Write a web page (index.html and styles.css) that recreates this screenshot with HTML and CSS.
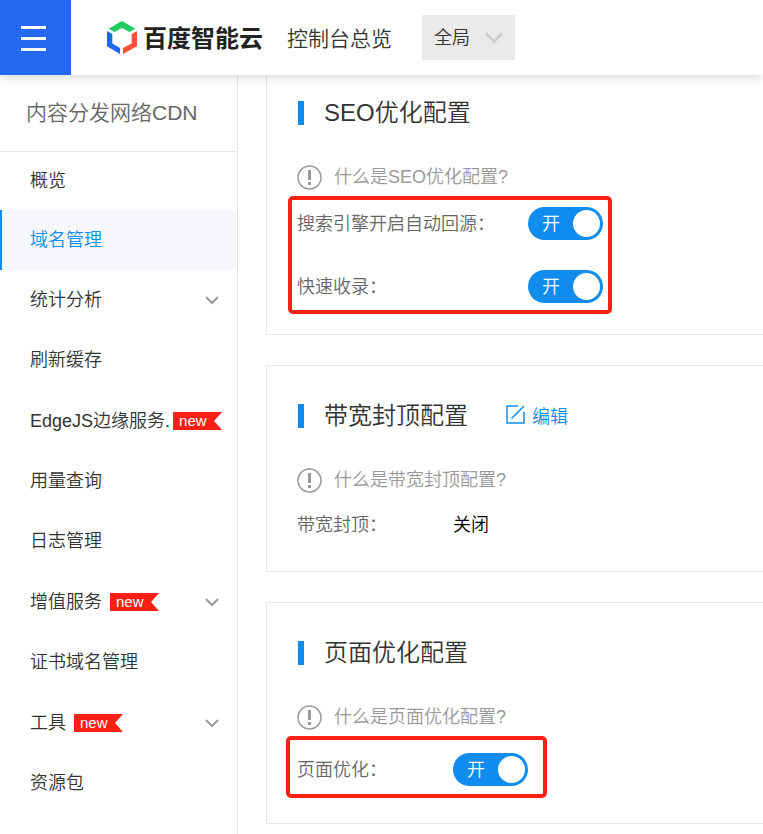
FILE: index.html
```
<!DOCTYPE html>
<html lang="zh-CN">

<head>
  <meta charset="utf-8">
  <title>内容分发网络CDN</title>
  <link rel="stylesheet" href="styles.css">
</head>

<body>
  <header class="header">
    <button type="button" class="menu-toggle" aria-label="菜单">
      <span></span>
      <span></span>
      <span></span>
    </button>
    <a href="#" class="logo">
      <svg width="30" height="34" viewBox="0 0 30 34">
        <path fill="#21cb63" d="M1.500 7.800 15 0l13.500 7.800-6 3.200-7.500-4-7.500 4z" />
        <path fill="#1a66ff" d="M0 10l5.300 3v9.500l7.700 4.500v6L0 25.300z" />
        <path fill="#ff5038" d="M30 10l-5.300 3v9.500L16 27v6l14-7.700z" />
      </svg>
      <span>百度智能云</span>
    </a>
    <a href="#" class="overview">控制台总览</a>
    <div class="region">
      <select aria-label="区域">
        <option>全局</option>
      </select>
      <svg width="18" height="12" viewBox="0 0 18 12">
        <path d="M1 1.500l8 8 8-8" />
      </svg>
    </div>
  </header>

  <div class="layout">
    <nav class="sidebar">
      <h1>内容分发网络CDN</h1>
      <ul class="menu">
        <li><a href="#" class="first">概览</a></li>
        <li><a href="#" class="active">域名管理</a></li>
        <li>
          <a href="#">统计分析
            <svg class="arrow" width="14" height="9" viewBox="0 0 14 9"><path d="M1 1l6 6 6-6" /></svg>
          </a>
        </li>
        <li><a href="#">刷新缓存</a></li>
        <li><a href="#" class="has-badge"><span class="long">EdgeJS边缘服务.</span><span class="badge">new</span></a></li>
        <li><a href="#">用量查询</a></li>
        <li><a href="#">日志管理</a></li>
        <li>
          <a href="#" class="has-badge">增值服务<span class="badge">new</span>
            <svg class="arrow" width="14" height="9" viewBox="0 0 14 9"><path d="M1 1l6 6 6-6" /></svg>
          </a>
        </li>
        <li><a href="#">证书域名管理</a></li>
        <li>
          <a href="#" class="has-badge">工具<span class="badge">new</span>
            <svg class="arrow" width="14" height="9" viewBox="0 0 14 9"><path d="M1 1l6 6 6-6" /></svg>
          </a>
        </li>
        <li><a href="#">资源包</a></li>
      </ul>
    </nav>

    <main class="content">
      <section class="card">
        <div class="card-title">
          <h2>SEO优化配置</h2>
        </div>
        <p class="tip">
          <svg width="25" height="25" viewBox="0 0 25 25"><circle cx="12.500" cy="12.500" r="11.500" /><path d="M12.500 5v10M12.500 17v3" /></svg>
          <span>什么是SEO优化配置?</span>
        </p>
        <div class="rows wide marked">
          <div class="row">
            <label for="autoSource">搜索引擎开启自动回源：</label>
            <span class="switch"><input type="checkbox" id="autoSource" checked><span>开</span></span>
          </div>
          <div class="row">
            <label for="fastIndex">快速收录：</label>
            <span class="switch"><input type="checkbox" id="fastIndex" checked><span>开</span></span>
          </div>
        </div>
      </section>

      <section class="card">
        <div class="card-title">
          <h2>带宽封顶配置</h2>
          <a href="#" class="edit">
            <svg width="19" height="19" viewBox="0 0 19 19"><path d="M12 1H1v17h17V7M5.500 13.500L18 1" /></svg>
            编辑
          </a>
        </div>
        <p class="tip">
          <svg width="25" height="25" viewBox="0 0 25 25"><circle cx="12.500" cy="12.500" r="11.500" /><path d="M12.500 5v10M12.500 17v3" /></svg>
          <span>什么是带宽封顶配置?</span>
        </p>
        <div class="rows">
          <div class="row">
            <span class="name">带宽封顶：</span>
            <span class="value">关闭</span>
          </div>
        </div>
      </section>

      <section class="card">
        <div class="card-title">
          <h2>页面优化配置</h2>
        </div>
        <p class="tip">
          <svg width="25" height="25" viewBox="0 0 25 25"><circle cx="12.500" cy="12.500" r="11.500" /><path d="M12.500 5v10M12.500 17v3" /></svg>
          <span>什么是页面优化配置?</span>
        </p>
        <div class="rows marked single">
          <div class="row">
            <label for="pageOptimize">页面优化：</label>
            <span class="switch"><input type="checkbox" id="pageOptimize" checked><span>开</span></span>
          </div>
        </div>
      </section>
    </main>
  </div>
</body>

</html>
```

FILE: styles.css
```
*,
*::before,
*::after {
  box-sizing: border-box;
}

body {
  margin: 0;
  min-height: 100vh;
  display: flex;
  flex-direction: column;
  font-family: "Liberation Sans", "Noto Sans CJK SC", sans-serif;
  font-size: 18px;
  font-weight: 350;
  color: #333;
  background-color: #fff;
}

a {
  color: inherit;
  text-decoration: none;
}

svg {
  flex: none;
  fill: none;
}

/* Header */
.header {
  position: sticky;
  top: 0;
  z-index: 1;
  display: flex;
  align-items: center;
  height: 75px;
  background-color: #fff;
  box-shadow: 0 2px 10px rgba(0, 0, 0, 0.16);
}

.menu-toggle {
  display: flex;
  flex-direction: column;
  justify-content: center;
  gap: 8px;
  width: 71px;
  height: 75px;
  padding: 1px 25px 0 21px;
  border: none;
  background-color: #2468f2;
  cursor: pointer;
}

.menu-toggle span {
  height: 3px;
  background-color: #fff;
}

.logo {
  display: flex;
  align-items: center;
  gap: 6px;
  margin-left: 36px;
  font-size: 24px;
  font-weight: 700;
  color: #222;
}

.logo span {
  padding-bottom: 2px;
}

.overview {
  margin-left: 24px;
  padding-bottom: 2px;
  font-size: 21px;
}

.region {
  position: relative;
  margin-left: 30px;
}

.region select {
  width: 93px;
  height: 45px;
  padding: 0 12px;
  border: none;
  border-radius: 0;
  background-color: #eaeaea;
  color: #333;
  font: inherit;
  appearance: none;
}

.region svg {
  position: absolute;
  right: 12px;
  top: 17px;
  stroke: #ccc;
  stroke-width: 3;
  pointer-events: none;
}

/* Sidebar */
.layout {
  display: flex;
  flex: 1;
}

.sidebar {
  flex: none;
  width: 238px;
  padding-right: 1px;
  border-right: 1px solid #e6e6e6;
}

.sidebar h1 {
  margin: 0;
  padding-left: 26px;
  border-bottom: 1px solid #e8e8e8;
  font-size: 21px;
  font-weight: inherit;
  line-height: 76px;
  color: #666;
}

.menu {
  margin: 0;
  padding: 0;
  list-style: none;
}

.menu a {
  display: flex;
  align-items: center;
  height: 60px;
  padding: 0 17px 4px 30px;
  white-space: nowrap;
}

.menu a.first {
  height: 58px;
}

.menu a.has-badge {
  height: 61px;
}

.menu a.active {
  padding-left: 28px;
  border-left: 2px solid #108cee;
  background-color: #f5f7fb;
  color: #108cee;
}

.menu .long {
  margin-right: -5px;
}

.badge {
  flex: none;
  width: 49px;
  margin-top: 5px;
  margin-left: 8px;
  padding-left: 6px;
  background-color: #ff2015;
  clip-path: polygon(0 0, 100% 0, 41px 50%, 100% 100%, 0 100%);
  color: #fff;
  font-size: 15px;
  line-height: 18px;
}

.arrow {
  margin-top: 5px;
  margin-left: auto;
  stroke: #999;
  stroke-width: 2;
}

/* Cards */
.content {
  flex: 1;
  padding: 0 0 10px 28px;
}

.card {
  margin-bottom: 30px;
  padding: 32px 30px 31px;
  border: 1px solid #e8e8e8;
  border-right: none;
}

.card:first-child {
  padding-top: 20px;
  border-top: none;
}

.card:last-child {
  margin-bottom: 0;
}

.card-title {
  display: flex;
  align-items: center;
  height: 36px;
  padding-left: 1px;
}

.card-title h2 {
  margin: 0;
  padding-left: 20px;
  border-left: 6px solid #108cee;
  font-size: 24px;
  font-weight: inherit;
  line-height: 24px;
}

.edit {
  display: flex;
  align-items: center;
  gap: 7px;
  margin-left: 38px;
  padding-bottom: 3px;
  color: #108cee;
}

.edit svg {
  stroke: #108cee;
  stroke-width: 1.5;
}

.tip {
  display: flex;
  align-items: center;
  gap: 12px;
  height: 24px;
  margin: 34px 0 18px;
  color: #999;
}

.tip svg {
  stroke: #999;
  stroke-width: 1.5;
}

.tip path {
  stroke-width: 3;
}

.tip span {
  padding-bottom: 4px;
}

.rows {
  position: relative;
  display: flex;
  flex-direction: column;
  gap: 30px;
}

.rows.single {
  padding: 6px 0;
}

.row {
  display: flex;
  align-items: center;
  min-height: 30px;
}

.row label,
.row .name {
  width: 156px;
  padding-bottom: 4px;
  color: #666;
}

.wide .row label {
  width: 231px;
}

.value {
  padding-bottom: 4px;
  color: #000;
}

/* Red frame drawn over the marked settings */
.marked::after {
  content: "";
  position: absolute;
  top: -11px;
  bottom: -11px;
  left: -9px;
  width: 324px;
  border: 4px solid #ff2015;
  border-radius: 5px;
  pointer-events: none;
}

.single::after {
  bottom: -6px;
  left: -11px;
  width: 261px;
}

/* Switch */
.switch {
  position: relative;
  display: flex;
  color: #fff;
}

.switch input {
  width: 75px;
  height: 33px;
  margin: 0;
  border-radius: 17px;
  background-color: #ccc;
  appearance: none;
  cursor: pointer;
}

.switch input::before {
  content: "";
  display: block;
  width: 27px;
  height: 27px;
  margin: 3px;
  border-radius: 50%;
  background-color: #fff;
}

.switch input:checked {
  background-color: #108cee;
}

.switch input:checked::before {
  margin-left: 45px;
}

.switch span {
  position: absolute;
  left: 14px;
  line-height: 34px;
  pointer-events: none;
}
```
